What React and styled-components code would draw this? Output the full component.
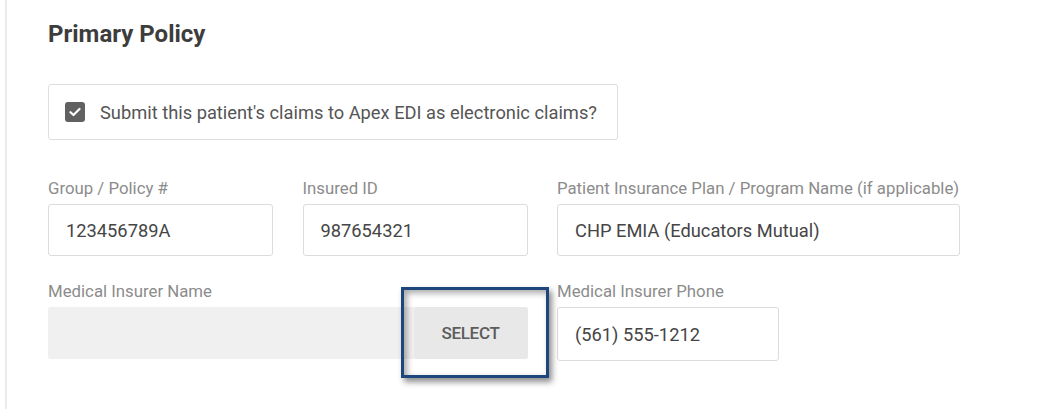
import React from "react";
import styled, { createGlobalStyle } from "styled-components";

const Global = createGlobalStyle`
  html, body { margin: 0; padding: 0; background: #ffffff; }
  body { font-family: Roboto, "Liberation Sans", Arial, sans-serif; }
  * { box-sizing: border-box; }
`;

const Page = styled.div`
  width: 1040px;
  height: 409px;
  padding-left: 5px;
  overflow: hidden;
`;

const Card = styled.section`
  height: 100%;
  border-left: 2px solid #ebebeb;
  padding: 22px 0 0 41px;
`;

const Title = styled.h2`
  margin: 0;
  font-size: 24px;
  line-height: 24px;
  font-weight: 700;
  color: #3d3d3d;
`;

const CheckBox = styled.label`
  margin-top: 38px;
  display: inline-flex;
  align-items: center;
  gap: 15px;
  height: 56px;
  padding: 0 20px 0 16px;
  border: 1px solid #dedede;
  border-radius: 3px;
  font-size: 18.3px;
  color: #555555;
`;

const Tick = styled.span`
  width: 20px;
  height: 20px;
  border-radius: 3px;
  background: #616161;
  display: flex;
  align-items: center;
  justify-content: center;
`;

const Grid = styled.div`
  margin-top: 38px;
  display: grid;
  grid-template-columns: 225px 225px 403px;
  column-gap: 29.5px;
  row-gap: 25px;
  align-items: start;
`;

const Field = styled.div`
  display: flex;
  flex-direction: column;
  gap: 6px;
  grid-column: ${(p) => p.$span || "auto"};
  width: ${(p) => p.$width || "auto"};
`;

const Label = styled.div`
  font-size: 16.8px;
  line-height: 20px;
  color: #8c8c8c;
  white-space: nowrap;
`;

const Input = styled.div`
  height: ${(p) => p.$h || 52}px;
  border: 1px solid #dcdcdc;
  border-radius: 3px;
  background: #fff;
  display: flex;
  align-items: center;
  padding-left: 17px;
  font-size: 18.3px;
  color: #454545;
`;

const Picker = styled.div`
  height: 52px;
  border-radius: 3px;
  background: #f0f0f0;
  display: flex;
  justify-content: flex-end;
  position: relative;
`;

const SelectButton = styled.button`
  width: 114px;
  height: 52px;
  border: none;
  border-radius: 3px;
  background: #e8e8e8;
  font-family: inherit;
  font-size: 17px;
  font-weight: 500;
  color: #5c5c5c;
  letter-spacing: -0.3px;
  cursor: pointer;
`;

const Highlight = styled.div`
  position: absolute;
  right: -21px;
  top: -20px;
  width: 148px;
  height: 91px;
  border: 3.5px solid #1d467c;
  box-shadow: 3px 4px 6px rgba(0, 0, 0, 0.45), inset 3px 3px 6px rgba(0, 0, 0, 0.35);
  pointer-events: none;
`;

export default function App() {
  return (
    <>
      <Global />
      <Page>
        <Card>
          <Title>Primary Policy</Title>
          <CheckBox>
            <Tick>
              <svg width="12" height="10" viewBox="0 0 12 10">
                <path d="M1.5 5.2 L4.5 8 L10.5 2" fill="none" stroke="#fff" strokeWidth="2.2" strokeLinecap="round" strokeLinejoin="round" />
              </svg>
            </Tick>
            Submit this patient's claims to Apex EDI as electronic claims?
          </CheckBox>
          <Grid>
            <Field>
              <Label>Group / Policy #</Label>
              <Input>123456789A</Input>
            </Field>
            <Field>
              <Label>Insured ID</Label>
              <Input>987654321</Input>
            </Field>
            <Field>
              <Label>Patient Insurance Plan / Program Name (if applicable)</Label>
              <Input>CHP EMIA (Educators Mutual)</Input>
            </Field>
            <Field $span="1 / span 2">
              <Label>Medical Insurer Name</Label>
              <Picker>
                <SelectButton>SELECT</SelectButton>
                <Highlight />
              </Picker>
            </Field>
            <Field $width="222px">
              <Label>Medical Insurer Phone</Label>
              <Input $h={54}>(561) 555-1212</Input>
            </Field>
          </Grid>
        </Card>
      </Page>
    </>
  );
}
